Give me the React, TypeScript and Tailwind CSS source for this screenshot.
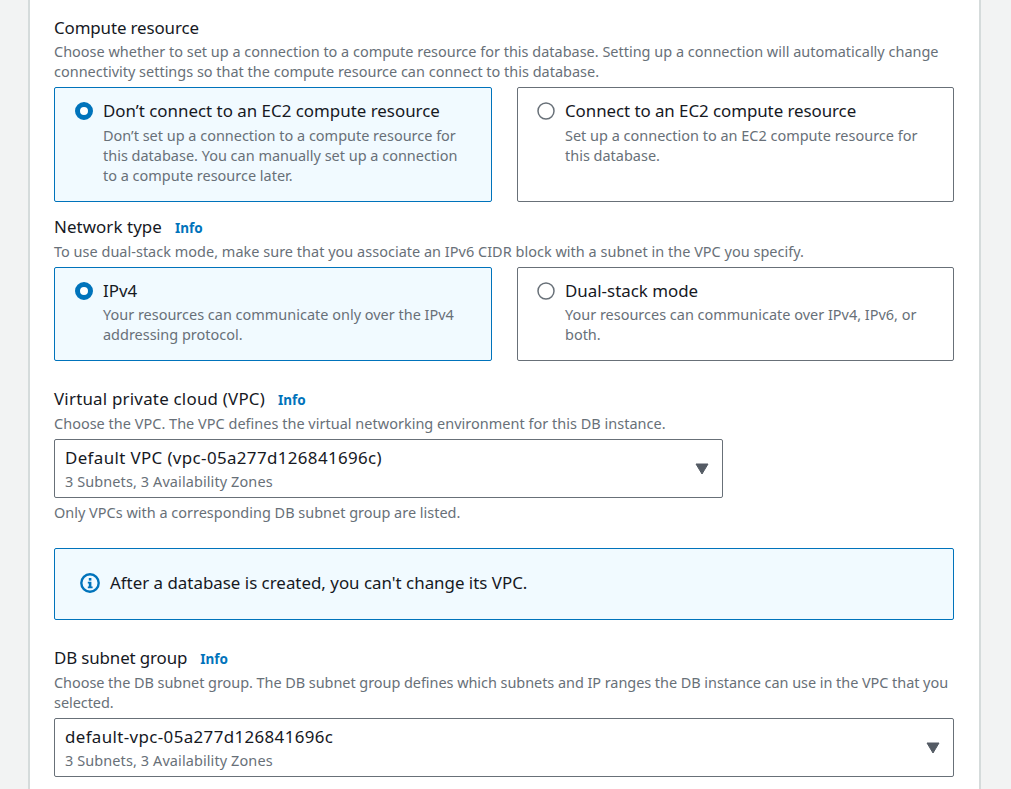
const font = "[font-family:'Noto_Sans',sans-serif]";

function Radio({ checked }: { checked?: boolean }) {
  return (
    <svg width="18" height="18" viewBox="0 0 18 18" className="shrink-0">
      {checked ? (
        <circle cx="9" cy="9" r="6.5" fill="#fff" stroke="#0073bb" strokeWidth="5" />
      ) : (
        <circle cx="9" cy="9" r="8" fill="#fff" stroke="#687078" strokeWidth="1.5" />
      )}
    </svg>
  );
}

function Tile({
  title,
  lines,
  checked,
  h,
  descGap,
  titleClass = '',
}: {
  title: string;
  lines: string[];
  checked?: boolean;
  h: string;
  descGap: string;
  titleClass?: string;
}) {
  return (
    <div
      className={`flex gap-[10px] rounded-[2px] border pr-[16px] pt-[12px] ${h} ${
        checked ? 'border-[#0073bb] bg-[#f1faff] pl-[20px]' : 'border-[#687078] bg-white pl-[19.5px]'
      }`}
    >
      <div className="pt-[2px]">
        <Radio checked={checked} />
      </div>
      <div>
        <div className={`text-[16.9px] leading-[22px] text-[#16191f] ${titleClass}`}>{title}</div>
        <div className={`text-[14.48px] leading-[20px] text-[#687078] ${descGap}`}>
          {lines.map((l) => (
            <div key={l} className="whitespace-nowrap">{l}</div>
          ))}
        </div>
      </div>
    </div>
  );
}

function Label({ text, info, className = '' }: { text: string; info?: boolean; className?: string }) {
  return (
    <div className="flex items-center gap-[13px] text-[16.9px] leading-[22px] text-[#16191f]">
      <span className={className}>{text}</span>
      {info && <span className="pt-[1px] text-[13.5px] leading-[20px] font-bold text-[#0073bb]">Info</span>}
    </div>
  );
}

function Desc({ children, className = '' }: { children: React.ReactNode; className?: string }) {
  return <div className={`whitespace-nowrap text-[14.48px] leading-[20px] text-[#687078] ${className}`}>{children}</div>;
}

function Select({ value, sub, w }: { value: string; sub: string; w: string }) {
  return (
    <div
      className={`flex h-[59px] items-center justify-between rounded-[2px] border border-[#687078] bg-white pl-[10px] pr-[13px] ${w}`}
    >
      <div className="pt-[2px]">
        <div className="text-[16.9px] leading-[22px] tracking-[0.38px] text-[#16191f]">{value}</div>
        <div className="mt-[3px] text-[14.48px] leading-[20px] tracking-[0.1px] text-[#687078]">{sub}</div>
      </div>
      <svg width="14" height="12" viewBox="0 0 14 12" className="shrink-0">
        <path d="M1 1h12L7 11z" fill="#545b64" stroke="#545b64" strokeWidth="1" strokeLinejoin="round" />
      </svg>
    </div>
  );
}

export default function App() {
  return (
    <div className={`h-[789px] w-[1011px] overflow-hidden bg-[#f2f3f3] ${font}`}>
      <div className="ml-[28px] h-full w-[953px] border-x-2 border-[#d5dbdb] bg-white pl-[24px] pr-[25px] pt-[17px]">
        <Label text="Compute resource" className="tracking-[-0.12px]" />
        <div className="mt-[3px]">
          <Desc>
            Choose whether to set up a connection to a compute resource for this database. Setting up a connection will automatically change
            <br />
            connectivity settings so that the compute resource can connect to this database.
          </Desc>
        </div>
        <div className="mt-[5px] grid grid-cols-[437.5px_437.5px] gap-x-[25px]">
          <Tile
            checked
            h="h-[115px]"
            descGap="mt-[4px]"
            title="Don’t connect to an EC2 compute resource"
            lines={[
              'Don’t set up a connection to a compute resource for',
              'this database. You can manually set up a connection',
              'to a compute resource later.',
            ]}
          />
          <Tile
            h="h-[115px]"
            descGap="mt-[4px]"
            titleClass="tracking-[-0.06px]"
            title="Connect to an EC2 compute resource"
            lines={['Set up a connection to an EC2 compute resource for', 'this database.']}
          />
        </div>

        <div className="mt-[14px]">
          <Label text="Network type" info className="tracking-[0.08px]" />
        </div>
        <div className="mt-[4px]">
          <Desc className="tracking-[0.02px]">To use dual-stack mode, make sure that you associate an IPv6 CIDR block with a subnet in the VPC you specify.</Desc>
        </div>
        <div className="mt-[5px] grid grid-cols-[437.5px_437.5px] gap-x-[25px]">
          <Tile
            checked
            h="h-[94px]"
            descGap="mt-[3px]"
            title="IPv4"
            lines={['Your resources can communicate only over the IPv4', 'addressing protocol.']}
          />
          <Tile
            h="h-[94px]"
            descGap="mt-[3px]"
            title="Dual-stack mode"
            lines={['Your resources can communicate over IPv4, IPv6, or', 'both.']}
          />
        </div>

        <div className="mt-[27px]">
          <Label text="Virtual private cloud (VPC)" info className="tracking-[0.22px]" />
        </div>
        <div className="mt-[4px]">
          <Desc className="tracking-[0.02px]">Choose the VPC. The VPC defines the virtual networking environment for this DB instance.</Desc>
        </div>
        <div className="mt-[5px]">
          <Select w="w-[669px]" value="Default VPC (vpc-05a277d126841696c)" sub="3 Subnets, 3 Availability Zones" />
        </div>
        <div className="mt-[5px]">
          <Desc>Only VPCs with a corresponding DB subnet group are listed.</Desc>
        </div>

        <div className="mt-[25px] flex h-[72px] items-center gap-[10px] rounded-[2px] border border-[#0073bb] bg-[#f1faff] pb-[2px] pl-[25px]">
          <svg width="20" height="20" viewBox="0 0 20 20" className="shrink-0">
            <circle cx="10" cy="10" r="8.7" fill="none" stroke="#0073bb" strokeWidth="2.4" />
            <rect x="8.8" y="5" width="2.6" height="2.6" fill="#0073bb" />
            <path d="M7.8 8.8h3.6v4.8h1.2v1.6H7.8v-1.6h1v-3.2h-1z" fill="#0073bb" />
          </svg>
          <span className="text-[16.9px] leading-[22px] text-[#16191f]">After a database is created, you can't change its VPC.</span>
        </div>

        <div className="mt-[27px]">
          <Label text="DB subnet group" info className="tracking-[-0.13px]" />
        </div>
        <div className="mt-[4px]">
          <Desc className="tracking-[-0.05px]">
            Choose the DB subnet group. The DB subnet group defines which subnets and IP ranges the DB instance can use in the VPC that you
            <br />
            selected.
          </Desc>
        </div>
        <div className="mt-[5px]">
          <Select w="w-[900px]" value="default-vpc-05a277d126841696c" sub="3 Subnets, 3 Availability Zones" />
        </div>
      </div>
    </div>
  );
}
